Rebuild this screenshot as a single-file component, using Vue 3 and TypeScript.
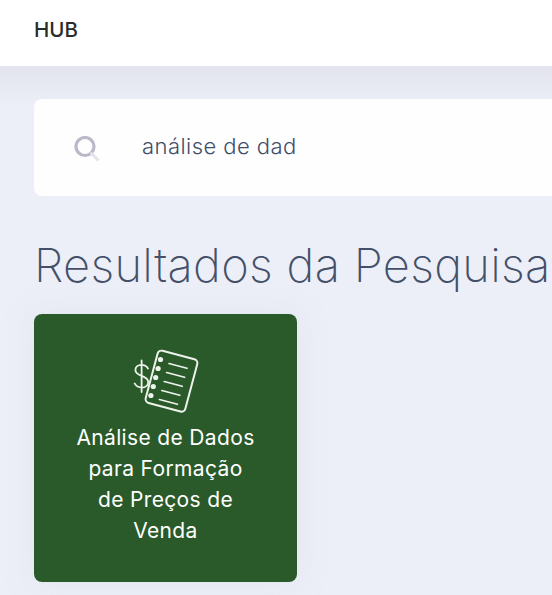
<script setup lang="ts">
const query = 'análise de dad'
const results = [{ id: 1, title: 'Análise de Dados para Formação de Preços de Venda' }]
const lines = [0, 1, 2, 3, 4]
</script>

<template>
  <div class="page">
    <header class="topbar">
      <span class="brand">HUB</span>
    </header>
    <main class="content">
      <div class="search">
        <svg class="search-icon" width="26" height="26" viewBox="0 0 26 26" fill="none">
          <circle cx="11" cy="10.5" r="9" stroke="#b9b9c9" stroke-width="3.2" />
          <path d="M17.5 17.5l6 6" stroke="#e3e3ea" stroke-width="3" stroke-linecap="round" />
        </svg>
        <span class="query">{{ query }}</span>
      </div>
      <h1 class="title">Resultados da Pesquisa</h1>
      <div class="grid">
        <article v-for="item in results" :key="item.id" class="card">
          <svg class="card-icon" width="68" height="68" viewBox="0 0 68 68" fill="none" stroke="#eef3ec" stroke-linecap="round">
            <rect x="20" y="7" width="41" height="54" rx="4" transform="rotate(15 40 34)" stroke-width="2" />
            <g stroke-width="1.7">
              <path v-for="i in lines" :key="i" :d="`M${38 - i * 2.4} ${16.5 + i * 9}l18 4.8`" />
            </g>
            <g fill="#eef3ec" stroke="none">
              <circle v-for="i in lines" :key="i" cx="0" cy="0" r="2.6" :transform="`translate(${29.5 - i * 2.4} ${12.5 + i * 9})`" />
            </g>
            <path d="M17 21.5c-1.6-2.6-3.6-3.7-6.4-3.7-3.6 0-6.2 2.1-6.2 5.2 0 7 12.8 4.8 12.8 12 0 3.3-2.8 5.6-6.4 5.6-3.2 0-5.6-1.5-7.2-4.2M10.6 13.5v31.5" stroke-width="1.8" />
          </svg>
          <p class="card-title">{{ item.title }}</p>
        </article>
      </div>
    </main>
  </div>
</template>

<style>
html,
body {
  margin: 0;
  overflow: hidden;
}
</style>

<style scoped>
.page {
  width: 552px;
  height: 595px;
  overflow: hidden;
  background: #eceff7;
  font-family: Inter, sans-serif;
}

.topbar {
  height: 66px;
  display: flex;
  align-items: center;
  padding: 0 34px;
  background: #fff;
  box-sizing: border-box;
}

.brand {
  font-size: 20.5px;
  font-weight: 500;
  color: #2b2b2b;
  margin-top: -7px;
}

.content {
  padding: 33px 0 0 34px;
  background: linear-gradient(180deg, #e3e4ee 0, #eceff7 40px);
}

.search {
  width: 600px;
  height: 97px;
  display: flex;
  align-items: center;
  background: #fefefe;
  border-radius: 8px 0 0 8px;
}

.search-icon {
  margin-left: 40px;
  margin-top: 2px;
}

.query {
  margin-left: 42px;
  margin-top: -4px;
  font-size: 22px;
  font-weight: 300;
  letter-spacing: 0.45px;
  color: #414d69;
}

.title {
  margin: 39px 0 0;
  font-size: 47px;
  line-height: 60px;
  font-weight: 250;
  letter-spacing: 0.3px;
  color: #445069;
  white-space: nowrap;
}

.grid {
  margin-top: 19px;
  display: grid;
  grid-template-columns: 263px;
}

.card {
  height: 268px;
  box-sizing: border-box;
  padding: 33px 40px 0;
  display: flex;
  flex-direction: column;
  align-items: center;
  background: #2a5a2a;
  border-radius: 8px;
  box-shadow: 0 0 30px rgba(200, 205, 225, 0.25);
}

.card-icon {
  flex: none;
  margin-left: -2px;
}

.card-title {
  margin: 7px 0 0;
  font-size: 21px;
  line-height: 31px;
  font-weight: 400;
  letter-spacing: 0.35px;
  color: #fff;
  text-align: center;
}
</style>
